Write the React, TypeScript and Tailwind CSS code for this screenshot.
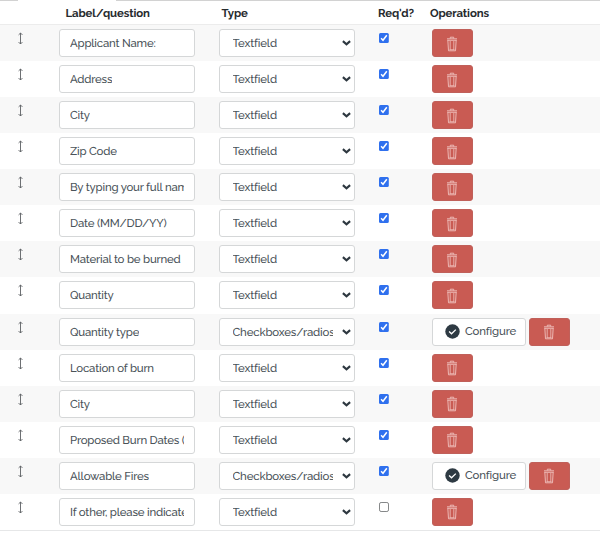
type Row = {
  label: string
  type: 'Textfield' | 'Checkboxes/radios'
  required: boolean
}

const rows: Row[] = [
  { label: 'Applicant Name:', type: 'Textfield', required: true },
  { label: 'Address', type: 'Textfield', required: true },
  { label: 'City', type: 'Textfield', required: true },
  { label: 'Zip Code', type: 'Textfield', required: true },
  { label: 'By typing your full nam', type: 'Textfield', required: true },
  { label: 'Date (MM/DD/YY)', type: 'Textfield', required: true },
  { label: 'Material to be burned', type: 'Textfield', required: true },
  { label: 'Quantity', type: 'Textfield', required: true },
  { label: 'Quantity type', type: 'Checkboxes/radios', required: true },
  { label: 'Location of burn', type: 'Textfield', required: true },
  { label: 'City', type: 'Textfield', required: true },
  { label: 'Proposed Burn Dates (', type: 'Textfield', required: true },
  { label: 'Allowable Fires', type: 'Checkboxes/radios', required: true },
  { label: 'If other, please indicate', type: 'Textfield', required: false },
]

function DragIcon() {
  return (
    <svg className="ml-[17px] mt-[3px] h-[13px] w-[7px]" viewBox="0 0 7 13" fill="none" stroke="#5c6063" strokeWidth="0.9">
      <path d="M3.5 1v11M1.6 2.9 3.5 1l1.9 1.9M1.6 10.1 3.5 12l1.9-1.9" />
    </svg>
  )
}

function Checkbox({ checked }: { checked: boolean }) {
  return (
    <svg className="mt-[4px] h-[11px] w-[11px]" viewBox="0 0 11 11" role="checkbox" aria-checked={checked}>
      {checked ? (
        <>
          <rect x="0" y="0" width="9.8" height="9.9" rx="1.5" fill="#2f70ee" />
          <path d="m2.1 5.3 1.9 2 3.8-5" fill="none" stroke="#fff" strokeWidth="1.5" />
        </>
      ) : (
        <rect x="0.5" y="0.5" width="9" height="9" rx="1.6" fill="#fff" stroke="#77797b" strokeWidth="0.9" />
      )}
    </svg>
  )
}

function DeleteButton() {
  return (
    <button className="flex h-[28px] w-[40.5px] shrink-0 items-center justify-center rounded-[3px] border border-[#c0605a] bg-[#c95b53] pt-px">
      <svg className="h-[16px] w-[12px]" viewBox="0 0 12 16" fill="none" stroke="#efc2be" strokeWidth="0.9">
        <path d="M1 2.8h10M4.3 2.5V1.2h3.4v1.3M1.8 3.8l.7 11h7l.7-11M1.6 4.3h8.8" />
        <path d="M4.2 5v8.8M7.8 5v8.8M3.5 13.7h5" strokeWidth="0.8" />
      </svg>
    </button>
  )
}

function ConfigureButton() {
  return (
    <button className="mr-[3px] flex h-[28px] w-[94px] shrink-0 items-center rounded-[3px] border border-[#d5d7d8] bg-white pl-[12px] font-medium">
      <svg className="mr-[5px] h-[15px] w-[15px]" viewBox="0 0 15 15" fill="none">
        <circle cx="7.5" cy="7.5" r="7.2" fill="#2e3a43" />
        <path d="m4.1 7.5 2.4 2.3 4.3-4.2" stroke="#fff" strokeWidth="1.3" />
      </svg>
      <span className="leading-none tracking-[-0.15px]">Configure</span>
    </button>
  )
}

export default function App() {
  return (
    <div className="h-[538px] w-[600px] overflow-hidden bg-white font-['Raleway','Lato',sans-serif] text-[11.4px] font-medium text-[#4a5359] [text-rendering:geometricPrecision]">
      <div className="flex h-px justify-between">
        <div className="w-[18px] bg-[#d2d2d2]" />
        <div className="w-[484px] bg-[#d2d2d2]" />
      </div>
      <div className="grid h-[24px] grid-cols-[65.5px_156px_156.5px_52px_1fr] items-center border-b border-[#ececec] pt-[2px] font-bold tracking-[-0.12px] text-[#272b2e]">
        <span />
        <span>Label/question</span>
        <span>Type</span>
        <span className="whitespace-nowrap">Req'd?</span>
        <span>Operations</span>
      </div>
      <div className="border-b border-[#e6e7e8]">
        {rows.map((row, i) => (
          <div key={i} className="grid h-[36.07px] grid-cols-[59px_160px_160px_53px_1fr] pt-[4px] odd:bg-[#f8f8f8]">
            <div><DragIcon /></div>
            <div className="flex h-[28px] w-[136px] items-center rounded-[3px] border border-[#d5d7d8] bg-white px-[10px]">
              <span className="overflow-hidden whitespace-nowrap leading-[18px] tracking-[-0.2px]">{row.label}</span>
            </div>
            <div className="flex h-[28px] w-[136px] items-center justify-between rounded-[3px] border border-[#d5d7d8] bg-white pl-[12.5px] pr-[3px]">
              <span className="w-[100px] overflow-hidden whitespace-nowrap leading-[18px] tracking-[-0.15px]">{row.type}</span>
              <svg className="h-[6px] w-[9px]" viewBox="0 0 9 6" fill="none" stroke="#2e3840" strokeWidth="2.1">
                <path d="m0.9 1.1 3.6 3.2 3.6-3.2" />
              </svg>
            </div>
            <div><Checkbox checked={row.required} /></div>
            <div className="flex">
              {row.type === 'Checkboxes/radios' && <ConfigureButton />}
              <DeleteButton />
            </div>
          </div>
        ))}
      </div>
    </div>
  )
}
